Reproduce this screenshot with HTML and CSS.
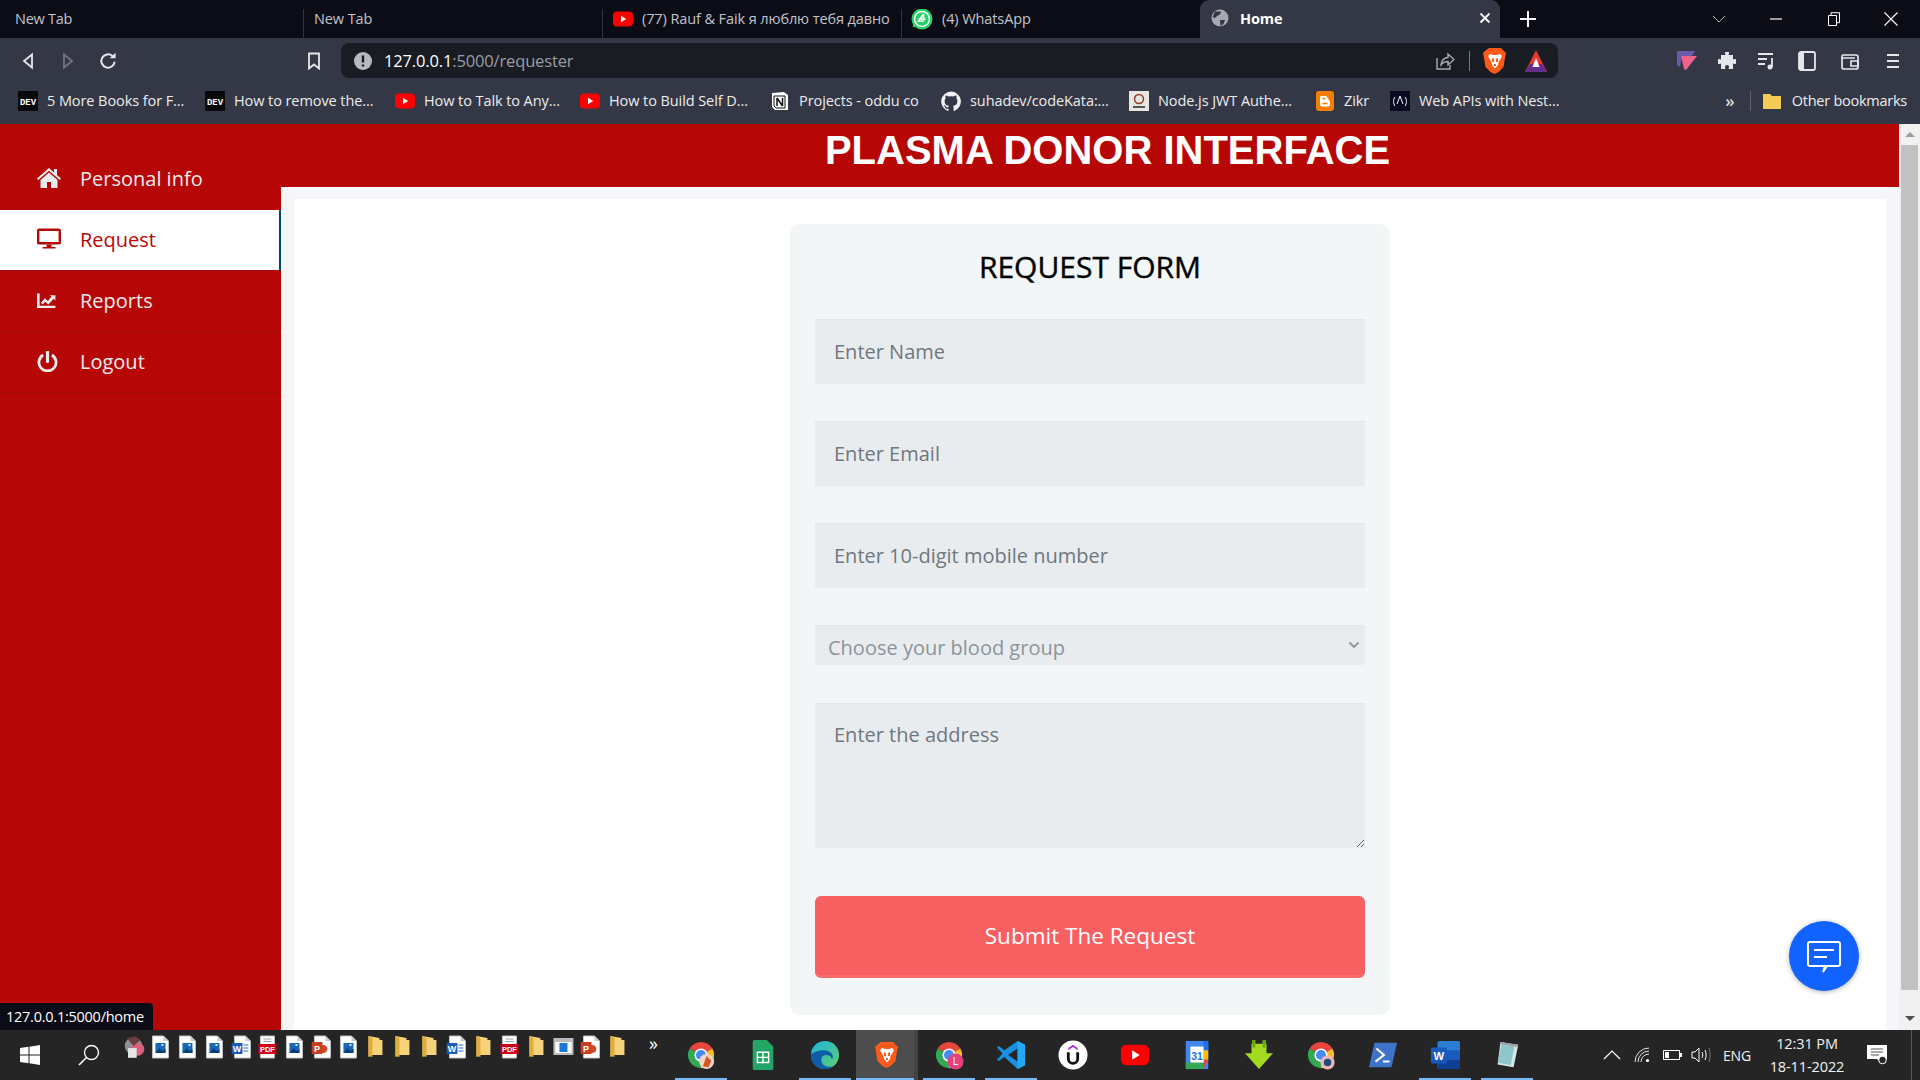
FILE: index.html
```html
<!DOCTYPE html>
<html lang="en">
<head>
<meta charset="utf-8">
<title>Home</title>
<link rel="stylesheet" href="styles.css">
</head>
<body>
<svg class="defs" width="0" height="0" aria-hidden="true">
  <symbol id="yt" viewBox="0 0 20 20"><rect x="0" y="2.500" width="20" height="15" rx="4" fill="#f00"/><path d="M8 6.800l5.200 3.200L8 13.200z" fill="#fff"/></symbol>
  <symbol id="chrome" viewBox="0 0 32 32"><path d="M16 16L3.880 9A14 14 0 0 1 28.120 9Z" fill="#e8453c"/><path d="M16 16L28.120 9A14 14 0 0 1 16 30Z" fill="#f9bb2d"/><path d="M16 16L16 30A14 14 0 0 1 3.880 9Z" fill="#34a853"/><circle cx="16" cy="16" r="7" fill="#fff"/><circle cx="16" cy="16" r="5.400" fill="#4a8af4"/></symbol>
  <symbol id="brave" viewBox="0 0 24 28"><path d="M6 1h12l3 3 2 2-1 5-1.500 9-5 5-4 2-4-2-5-5-1.500-9-1-5 2-2z" fill="#fb5a1b"/><path d="M7 7l3 1h4l3-1 2 2-1.500 3-2 3-.5 3-3 3.500L9 18l-.5-3-2-3L5 9z" fill="#fff"/><path d="M9 11l2 1v3H9zM15 11l-2 1v3h2zM11 17h2v2h-2z" fill="#fb5a1b"/></symbol>
  <symbol id="doc" viewBox="0 0 18 24"><path d="M1 1h11l5 5v17H1z" fill="#fff" stroke="#bfc3c7"/><path d="M12 1v5h5z" fill="#c7cbd0"/><rect x="4" y="8" width="10" height="10" fill="#1769b8"/><path d="M4 18l4-5 3 3 3-2v4z" fill="#0b3f7a"/><rect x="10" y="9" width="2" height="2" fill="#cfe5ff"/></symbol>
  <symbol id="docw" viewBox="0 0 20 24"><path d="M3 1h11l5 5v17H3z" fill="#fff" stroke="#bfc3c7"/><path d="M14 1v5h5z" fill="#c7cbd0"/><path d="M12 10h5M12 13h5M12 16h5" stroke="#2b6cc4"/><rect x="0" y="8" width="11" height="11" fill="#1d5bb8"/></symbol>
  <symbol id="docp" viewBox="0 0 20 24"><path d="M3 1h11l5 5v17H3z" fill="#fff" stroke="#bfc3c7"/><path d="M14 1v5h5z" fill="#c7cbd0"/><path d="M12 10a4 4 0 1 1-.1 0z" fill="#d24726"/><rect x="0" y="7" width="11" height="12" fill="#c9401f"/></symbol>
  <symbol id="docpdf" viewBox="0 0 20 24"><path d="M3 1h14v22H3z" fill="#fff" stroke="#bfc3c7"/><path d="M6 4h8M6 6.500h8" stroke="#9aa0a6"/><rect x="1" y="9" width="18" height="10" fill="#d4001a"/></symbol>
  <symbol id="folder" viewBox="0 0 16 24"><path d="M1 1l11 2v2h3v15H5l-4 2z" fill="#f6d27a"/><path d="M1 1l4 2v19l-4-1z" fill="#e0ad3c"/></symbol>
  <symbol id="dev" viewBox="0 0 20 20"><rect width="20" height="20" fill="#0a0a0a"/></symbol>
</svg>

<header class="tabstrip">
  <div class="tab tab-first"><span>New Tab</span></div>
  <div class="tab"><span>New Tab</span></div>
  <div class="tab"><svg class="ico20" viewBox="0 0 20 20"><use href="#yt"/></svg><span>(77) Rauf &amp; Faik я люблю тебя давно</span></div>
  <div class="tab tab-last"><svg class="ico22" viewBox="0 0 22 22"><circle cx="11" cy="11" r="10.500" fill="#25d366"/><path d="M3 19l1.500-5" stroke="#25d366" stroke-width="3"/><circle cx="11" cy="11" r="7.500" fill="none" stroke="#fff" stroke-width="1.500"/><path d="M12.500 6v7.200M12.500 13.200H7.500L12.500 6M14.500 11H7.500" stroke="#fff" stroke-width="1.600" fill="none"/></svg><span>(4) WhatsApp</span></div>
  <div class="tab-active">
    <svg class="ico18" viewBox="0 0 18 18"><circle cx="9" cy="9" r="8.500" fill="#a7a9b0"/><path d="M4 2.500h6l-1 3-3 1.500-2 2-2.500-1zM9 11h5l-1.500 4-3 2z" fill="#343745"/></svg>
    <span class="tab-title">Home</span>
    <svg class="tab-x" viewBox="0 0 12 12"><path d="M1.500 1.500l9 9M10.500 1.500l-9 9" stroke="#fff" stroke-width="1.800"/></svg>
  </div>
  <svg class="newtab" viewBox="0 0 16 16"><path d="M8 0v16M0 8h16" stroke="#fff" stroke-width="2"/></svg>
  <div class="winctl">
    <div class="wincell"><svg class="ico12" viewBox="0 0 14 8"><path d="M1 1l6 6 6-6" stroke="#b0b2ba" fill="none"/></svg></div>
    <div class="wincell"><svg class="ico12" viewBox="0 0 14 14"><path d="M1 7h12" stroke="#fff" stroke-width="1.200"/></svg></div>
    <div class="wincell"><svg class="ico14" viewBox="0 0 14 14"><path d="M1.500 3.500h8v10h-8zM4 3.500V.7h8.500v10H9.500" stroke="#fff" fill="none"/></svg></div>
    <div class="wincell"><svg class="ico14" viewBox="0 0 14 14"><path d="M.5.500l13 13M13.500.500l-13 13" stroke="#fff" stroke-width="1.100"/></svg></div>
  </div>
</header>

<nav class="toolbar">
  <div class="tool tool-first"><svg class="ico18" viewBox="0 0 18 18"><path d="M13 2.500L5 9l8 6.500z" fill="none" stroke="#e6e7ea" stroke-width="1.800"/></svg></div>
  <div class="tool"><svg class="ico18" viewBox="0 0 18 18"><path d="M5 2.500L13 9l-8 6.500z" fill="none" stroke="#74767f" stroke-width="1.800"/></svg></div>
  <div class="tool"><svg class="ico20" viewBox="0 0 18 18"><path d="M15 9.500A6 6 0 1 1 13 4.500" fill="none" stroke="#e6e7ea" stroke-width="1.800"/><path d="M10.500 6.500H15.800V1.500z" fill="#e6e7ea"/></svg></div>
  <div class="tool tool-bookmark"><svg class="ico18" viewBox="0 0 18 18"><path d="M4 1.500h10v15l-5-4-5 4z" fill="none" stroke="#e6e7ea" stroke-width="1.800"/></svg></div>
  <div class="omnibox">
    <svg class="ico18" viewBox="0 0 18 18"><circle cx="9" cy="9" r="9" fill="#b7b9c0"/><path d="M9 3.500v7M9 12.500v2" stroke="#1a1c23" stroke-width="2.400"/></svg>
    <span class="url"><span class="url-host">127.0.0.1</span>:5000/requester</span>
    <div class="omni-right">
      <svg class="ico20" viewBox="0 0 20 20"><path d="M2 7v11h13v-4" fill="none" stroke="#a9abb3" stroke-width="1.400"/><path d="M6 14c0-5 4-7.500 7-7.500V3l6 5.500-6 5.500v-3.500c-3 0-5 1-7 3.500z" fill="none" stroke="#a9abb3" stroke-width="1.400"/></svg>
      <span class="omni-div"></span>
      <svg class="ico-brave" viewBox="0 0 24 28"><use href="#brave"/></svg>
      <svg class="ico-bat" viewBox="0 0 24 24"><path d="M12 1L23 23H1z" fill="#e33b2e"/><path d="M1 23l5-8h12l5 8z" fill="#662d91"/><path d="M12 9l3.500 9h-7z" fill="#fff"/></svg>
    </div>
  </div>
  <div class="tool tool-ext"><svg class="ico20" viewBox="0 0 20 20"><path d="M0 0H18L15 5H5L3 16L0 14z" fill="#6a5aa8"/><path d="M4 5H20L9 19L7 18z" fill="#f0648c"/></svg></div>
  <div class="tool"><svg class="ico18" viewBox="0 0 18 18"><path d="M7 1a2 2 0 0 1 4 0c0 1-.5 1.500-.5 2H15v4.500c.5 0 1-.5 2-.5a2.500 2.500 0 0 1 0 5c-1 0-1.500-.5-2-.5V17h-4.500c0-.5.5-1 .5-2a2 2 0 0 0-4 0c0 1 .5 1.500.5 2H3v-5.500c-.5 0-1 .5-1.500.5a2.500 2.500 0 0 1 0-5c.5 0 1 .5 1.500.5V3h4.500C7.500 2.500 7 2 7 1z" fill="#e6e7ea"/></svg></div>
  <div class="tool"><svg class="ico20" viewBox="0 0 20 20"><path d="M1 3h15M1 8h9M1 13h7" stroke="#e6e7ea" stroke-width="1.800"/><path d="M15 7v9" stroke="#e6e7ea" stroke-width="1.800"/><circle cx="13" cy="16" r="2.500" fill="#e6e7ea"/></svg></div>
  <div class="tool"><svg class="ico20" viewBox="0 0 20 20"><rect x="2" y="1" width="16" height="18" rx="2" fill="none" stroke="#e6e7ea" stroke-width="1.800"/><rect x="2" y="1" width="5" height="18" fill="#e6e7ea"/></svg></div>
  <div class="tool tool-wallet"><svg class="ico20" viewBox="0 0 20 20"><path d="M3 4h13a2 2 0 0 1 2 2v10a2 2 0 0 1-2 2H4a2 2 0 0 1-2-2V5z" fill="none" stroke="#e6e7ea" stroke-width="1.700"/><path d="M2 7h13M11 10h7v5h-7z" fill="none" stroke="#e6e7ea" stroke-width="1.700"/></svg></div>
  <div class="tool"><svg class="ico18" viewBox="0 0 18 18"><path d="M3 3h12M3 9h12M3 15h12" stroke="#e6e7ea" stroke-width="1.800"/></svg></div>
</nav>

<nav class="bookmarks">
  <a class="bm w187"><svg class="ico20" viewBox="0 0 20 20"><use href="#dev"/><text x="10" y="13.800" class="svg-dev" text-anchor="middle">DEV</text></svg><span>5 More Books for F...</span></a>
  <a class="bm w190"><svg class="ico20" viewBox="0 0 20 20"><use href="#dev"/><text x="10" y="13.800" class="svg-dev" text-anchor="middle">DEV</text></svg><span>How to remove the...</span></a>
  <a class="bm w185"><svg class="ico20" viewBox="0 0 20 20"><use href="#yt"/></svg><span>How to Talk to Any...</span></a>
  <a class="bm w190"><svg class="ico20" viewBox="0 0 20 20"><use href="#yt"/></svg><span>How to Build Self D...</span></a>
  <a class="bm w171"><svg class="ico20" viewBox="0 0 20 20"><path d="M2 2l12-1 4 3v15H5l-3-3z" fill="#fff"/><path d="M4 5h11v12H6l-2-2z" fill="#fff" stroke="#111"/><path d="M7 7v8M12.500 7v8M7 7l5.500 8" stroke="#111" stroke-width="1.500"/></svg><span>Projects - oddu co</span></a>
  <a class="bm w188"><svg class="ico20" viewBox="0 0 20 20"><path d="M10 .5a10 10 0 0 0-3.200 19.400c.5.100.7-.2.700-.5v-1.700c-2.800.6-3.400-1.300-3.400-1.300-.4-1.100-1.100-1.500-1.100-1.500-.9-.6.100-.6.100-.6 1 .1 1.500 1 1.500 1 .9 1.500 2.300 1.100 2.900.8.100-.6.300-1.100.6-1.300-2.200-.3-4.500-1.100-4.500-4.900 0-1.100.4-2 1-2.700-.1-.3-.4-1.300.1-2.700 0 0 .8-.3 2.800 1a9.600 9.600 0 0 1 5 0c1.900-1.300 2.800-1 2.800-1 .5 1.400.2 2.400.1 2.700.6.700 1 1.600 1 2.700 0 3.800-2.300 4.600-4.500 4.900.4.300.7.900.7 1.900v2.700c0 .3.200.6.700.5A10 10 0 0 0 10 .5z" fill="#f2f2f4"/></svg><span>suhadev/codeKata:...</span></a>
  <a class="bm w186"><svg class="ico20" viewBox="0 0 20 20"><rect width="20" height="20" fill="#e8e6e2"/><circle cx="10" cy="8" r="4.500" fill="none" stroke="#8a3b2c" stroke-width="1.500"/><path d="M4 16h12" stroke="#555" stroke-width="2"/></svg><span>Node.js JWT Authe...</span></a>
  <a class="bm w75"><svg class="ico20" viewBox="0 0 20 20"><rect x="1" width="18" height="20" rx="3" fill="#f57d00"/><path d="M6 5h5l2.500 2.500v1.500L15 10v4l-1.500 1.500h-7L5 14V6z" fill="#fff"/><path d="M7.500 7.500h3M7.500 12.500h5" stroke="#f57d00" stroke-width="1.400"/></svg><span>Zikr</span></a>
  <a class="bm"><svg class="ico20" viewBox="0 0 20 20"><rect width="20" height="20" fill="#0a0a23"/><path d="M5 6c-2 3-2 6 0 9M15 6c2 3 2 6 0 9M10 5l-3 8M10 5l3 8" stroke="#fff" fill="none"/></svg><span>Web APIs with Nest...</span></a>
  <span class="bm-more">»</span>
  <span class="bm-div"></span>
  <a class="bm bm-other"><svg class="ico20" viewBox="0 0 20 20"><path d="M1 3h7l2 2h9v13H1z" fill="#f6cb55"/></svg><span>Other bookmarks</span></a>
</nav>

<div class="page">
  <aside class="sidebar">
    <a class="side-item">
      <svg class="side-ico" viewBox="0 0 24 20"><path d="M12 0L0 10.500l1.300 1.500L12 2.800 22.700 12l1.300-1.500-4-3.500V1h-3v3.400z" fill="currentColor"/><path d="M12 4.500L3.500 12v8H10v-6h4v6h6.500v-8z" fill="currentColor"/></svg>
      <span>Personal info</span>
    </a>
    <a class="side-item side-active">
      <svg class="side-ico" viewBox="0 0 24 21"><rect x="1.200" y="1.200" width="21.600" height="13.600" rx="1" fill="none" stroke="currentColor" stroke-width="2.400"/><path d="M0 14h24v1.500H0zM9.500 16h5v2.500h-5zM5.500 18.500h13V20h-13z" fill="currentColor"/></svg>
      <span>Request</span>
    </a>
    <a class="side-item">
      <svg class="side-ico side-ico-sm" viewBox="0 0 24 18"><path d="M0 1h3v14h18v2.500H0z" fill="currentColor"/><path d="M4.500 11.500L9 6.500l3.500 3 4-5L14.500 3h6.500v6l-2-2-6 6.500-3.500-3-3 3z" fill="currentColor"/></svg>
      <span>Reports</span>
    </a>
    <a class="side-item">
      <svg class="side-ico side-ico-sm" viewBox="0 0 24 24"><path d="M7 4.500a9.800 9.800 0 1 0 10 0" fill="none" stroke="currentColor" stroke-width="3.200"/><path d="M12 1v11" stroke="currentColor" stroke-width="3.600" stroke-linecap="round"/></svg>
      <span>Logout</span>
    </a>
  </aside>

  <main class="main">
    <div class="banner"><h1>PLASMA DONOR INTERFACE</h1></div>
    <div class="content">
      <section class="panel">
        <form class="card">
          <h2>REQUEST FORM</h2>
          <input class="field" type="text" placeholder="Enter Name">
          <input class="field" type="text" placeholder="Enter Email">
          <input class="field" type="text" placeholder="Enter 10-digit mobile number">
          <div class="select-wrap">
            <select class="select"><option>Choose your blood group</option></select>
            <svg class="select-arrow" viewBox="0 0 12 8"><path d="M1.500 1.500L6 6l4.500-4.500" fill="none" stroke="#8b949b" stroke-width="1.800"/></svg>
          </div>
          <textarea class="area" placeholder="Enter the address"></textarea>
          <button class="submit" type="button">Submit The Request</button>
        </form>
      </section>
    </div>
  </main>

  <div class="scrollbar">
    <span class="arrow-up"></span>
    <span class="thumb"></span>
    <span class="arrow-down"></span>
  </div>

  <div class="status">127.0.0.1:5000/home</div>
  <button class="chat" type="button" aria-label="Chat">
    <svg viewBox="0 0 36 34"><path d="M4 2h28a2 2 0 0 1 2 2v20a2 2 0 0 1-2 2H21l-4 6 2-6H4a2 2 0 0 1-2-2V4a2 2 0 0 1 2-2z" fill="none" stroke="#fff" stroke-width="2"/><path d="M8 10h20M8 17h13" stroke="#fff" stroke-width="2"/></svg>
  </button>
</div>

<footer class="taskbar">
  <div class="start"><svg class="ico-win" viewBox="0 0 20 20"><path d="M0 3l8.500-1.200v7.700H0zM9.500 1.700L20 0v9.500H9.500zM0 10.500h8.500v7.700L0 17zM9.500 10.500H20V20L9.500 18.300z" fill="#fff"/></svg></div>
  <div class="search"><svg class="ico-search" viewBox="0 0 22 22"><circle cx="13.500" cy="8.500" r="7" fill="none" stroke="#fff" stroke-width="1.400"/><path d="M8.500 13.500L1 21" stroke="#fff" stroke-width="1.600"/></svg></div>
  <div class="quick">
    <svg class="q q-ring" viewBox="0 0 20 24"><circle cx="10" cy="11" r="8" fill="#8d8f92"/><circle cx="14" cy="14" r="6" fill="#d9627a"/><rect x="5" y="13" width="8" height="9" fill="#e5e5e5"/><path d="M4 4l8-2 4 4-6 5z" fill="#6d3f3c"/></svg>
    <svg class="q" viewBox="0 0 18 24"><use href="#doc"/></svg>
    <svg class="q" viewBox="0 0 18 24"><use href="#doc"/></svg>
    <svg class="q" viewBox="0 0 18 24"><use href="#doc"/></svg>
    <svg class="q" viewBox="0 0 20 24"><use href="#docw"/><text x="5.500" y="17" class="svg-w" text-anchor="middle">W</text></svg>
    <svg class="q" viewBox="0 0 20 24"><use href="#docpdf"/><text x="10" y="17" class="svg-pdf" text-anchor="middle">PDF</text></svg>
    <svg class="q" viewBox="0 0 18 24"><use href="#doc"/></svg>
    <svg class="q" viewBox="0 0 20 24"><use href="#docp"/><text x="5.500" y="17" class="svg-w" text-anchor="middle">P</text></svg>
    <svg class="q" viewBox="0 0 18 24"><use href="#doc"/></svg>
    <svg class="q" viewBox="0 0 16 24"><use href="#folder"/></svg>
    <svg class="q" viewBox="0 0 16 24"><use href="#folder"/></svg>
    <svg class="q" viewBox="0 0 16 24"><use href="#folder"/></svg>
    <svg class="q" viewBox="0 0 20 24"><use href="#docw"/><text x="5.500" y="17" class="svg-w" text-anchor="middle">W</text></svg>
    <svg class="q" viewBox="0 0 16 24"><use href="#folder"/></svg>
    <svg class="q" viewBox="0 0 20 24"><use href="#docpdf"/><text x="10" y="17" class="svg-pdf" text-anchor="middle">PDF</text></svg>
    <svg class="q" viewBox="0 0 16 24"><use href="#folder"/></svg>
    <svg class="q" viewBox="0 0 20 24"><rect x="0" y="3" width="20" height="17" fill="#b8bcc2"/><rect x="2" y="7" width="16" height="11" fill="#fff"/><rect x="6" y="8" width="8" height="9" fill="#1a78d8"/></svg>
    <svg class="q" viewBox="0 0 20 24"><use href="#docp"/><text x="5.500" y="17" class="svg-w" text-anchor="middle">P</text></svg>
    <svg class="q" viewBox="0 0 16 24"><use href="#folder"/></svg>
    <span class="q-more">»</span>
  </div>
  <div class="pinned">
    <div class="pin pin-on"><svg class="pi" viewBox="0 0 32 32"><use href="#chrome"/><circle cx="22" cy="23" r="8" fill="#f4d6c8"/><path d="M22 17l5 5-3 7-6-1z" fill="#d9551f"/></svg></div>
    <div class="pin"><svg class="pi pi-narrow" viewBox="0 0 22 32"><path d="M2 0h13l7 7v23a2 2 0 0 1-2 2H2a2 2 0 0 1-2-2V2a2 2 0 0 1 2-2z" fill="#23a566"/><path d="M5 13h12v11H5z" fill="none" stroke="#fff" stroke-width="1.500"/><path d="M11 13v11M5 18.500h12" stroke="#fff" stroke-width="1.500"/></svg></div>
    <div class="pin pin-on"><svg class="pi" viewBox="0 0 32 32"><defs><linearGradient id="edge" x1="0" y1="0" x2="1" y2="1"><stop offset="0" stop-color="#1fb2e0"/><stop offset="1" stop-color="#5bd06b"/></linearGradient></defs><circle cx="16" cy="16" r="15" fill="url(#edge)"/><path d="M1 16c0 9 7 15 15 15 4 0 7-1 9-3-7 2-13-1-13-7 0-3 2-5 5-5 4 0 6 2 6 4h1c2-4-3-9-9-9C8 11 1 14 1 16z" fill="#0e5da8"/></svg></div>
    <div class="pin pin-active"><svg class="pi pi-narrow" viewBox="0 0 24 28"><use href="#brave"/></svg></div>
    <div class="pin pin-on"><svg class="pi" viewBox="0 0 32 32"><use href="#chrome"/><circle cx="23" cy="23" r="8.500" fill="#e5407f"/><text x="23" y="27" class="svg-l" text-anchor="middle">L</text></svg></div>
    <div class="pin pin-on"><svg class="pi" viewBox="0 0 32 32"><path d="M23 1l8 4v22l-8 4-14-13-6 4.500-2-1.500 6-6.500-6-6.500 2-1.500L9 11z" fill="#1a8ee0"/><path d="M23 9L13 16l10 7z" fill="#252525"/><path d="M23 1l8 4v22l-8 4z" fill="#23a9f2"/></svg></div>
    <div class="pin"><svg class="pi" viewBox="0 0 32 32"><circle cx="16" cy="16" r="15.500" fill="#fff"/><path d="M16 5l5 3.500v2.500L16 7.500 11 11V8.500z" fill="#a435f0"/><path d="M11 13v7a5 5 0 0 0 10 0v-7" fill="none" stroke="#111" stroke-width="3"/></svg></div>
    <div class="pin"><svg class="pi" viewBox="0 0 32 32"><rect x="1" y="5" width="30" height="22" rx="6" fill="#f00"/><path d="M13 11l8 5-8 5z" fill="#fff"/></svg></div>
    <div class="pin"><svg class="pi" viewBox="0 0 32 32"><path d="M4 1h24v30H4z" fill="#4285f4"/><path d="M23 1h3a2 2 0 0 1 2 2v8h-5z" fill="#1a73e8"/><path d="M23 11h5v10h-5z" fill="#fbbc04"/><path d="M4 24h19v7H4z" fill="#34a853"/><path d="M23 21h5l-5 10z" fill="#ea4335"/><rect x="9" y="7" width="14" height="17" fill="#fff"/><text x="16" y="21" class="svg-cal" text-anchor="middle">31</text></svg></div>
    <div class="pin"><svg class="pi" viewBox="0 0 32 32"><path d="M9 0h3v4h8V0h3v4h1v10h7L16 31 1 14h7V4h1z" fill="#a3d91f"/><path d="M9 0h3v8H9zM20 0h3v8h-3z" fill="#6ea70f"/></svg></div>
    <div class="pin"><svg class="pi" viewBox="0 0 32 32"><use href="#chrome"/><circle cx="23" cy="24" r="7.500" fill="#f2b6b6"/><circle cx="23" cy="24" r="4" fill="#1f4d78"/></svg></div>
    <div class="pin"><svg class="pi" viewBox="0 0 32 32"><path d="M7 3h24l-6 26H1z" fill="#3f73c9"/><path d="M9 9l8 7-9 7M16 23h7" fill="none" stroke="#fff" stroke-width="2.200"/></svg></div>
    <div class="pin pin-on"><svg class="pi" viewBox="0 0 32 32"><rect x="8" y="1" width="24" height="30" rx="2" fill="#2b7cd3"/><rect x="8" y="11" width="24" height="10" fill="#185abd"/><rect x="8" y="21" width="24" height="10" fill="#103f91"/><rect x="1" y="8" width="17" height="17" rx="1.500" fill="#185abd"/><text x="9.500" y="21" class="svg-word" text-anchor="middle">W</text></svg></div>
    <div class="pin pin-on"><svg class="pi" viewBox="0 0 32 32"><path d="M9 2l19 3-5 24-17-3z" fill="#d4e8e9"/><path d="M10 5l14 2-4 20-14-3z" fill="#8fc6c9"/><path d="M9 2l19 3-.5 2.500L8.500 4.500z" fill="#9aa0a6"/></svg></div>
  </div>
  <div class="tray">
    <svg class="tr tr-chev" viewBox="0 0 18 10"><path d="M1 9l8-8 8 8" fill="none" stroke="#fff" stroke-width="1.200"/></svg>
    <svg class="tr tr-wifi" viewBox="0 0 16 16"><path d="M1 15A14 14 0 0 1 15 1M4 15A11 11 0 0 1 15 4" fill="none" stroke="#e6e6e6"/><path d="M7 15a8 8 0 0 1 8-8" fill="none" stroke="#e6e6e6"/><circle cx="13.500" cy="13.500" r="1.600" fill="#fff"/></svg>
    <svg class="tr tr-bat" viewBox="0 0 20 12"><path d="M.5 1.500h16v9H.5z" fill="none" stroke="#fff"/><rect x="2" y="3" width="4" height="6" fill="#fff"/><rect x="17" y="4" width="2" height="4" fill="#fff"/></svg>
    <svg class="tr tr-vol" viewBox="0 0 20 16"><path d="M1 5h3l4-4v14l-4-4H1z" fill="none" stroke="#fff"/><path d="M11 5c1 2 1 4 0 6" fill="none" stroke="#fff"/><path d="M14 3c1.500 3 1.500 7 0 10" fill="none" stroke="#fff"/><path d="M18 1c1.500 4 1.500 10 0 14" fill="none" stroke="#777"/></svg>
    <span class="tr-lang">ENG</span>
    <div class="clock"><span>12:31 PM</span><span>18-11-2022</span></div>
    <svg class="tr-note" viewBox="0 0 20 20"><path d="M0 0h20v14h-5l-1 4-4-4H0z" fill="#fff"/><path d="M4 4h12M4 7h12M4 10h8" stroke="#555"/><circle cx="15.500" cy="15" r="3.800" fill="#252525" stroke="#fff"/></svg>
    <span class="tr-desk"></span>
  </div>
</footer>
</body>
</html>
```

FILE: styles.css
```css
* { box-sizing: border-box; }
html, body { margin: 0; padding: 0; }
body {
  width: 1920px;
  height: 1080px;
  overflow: hidden;
  display: flex;
  flex-direction: column;
  font-family: "Open Sans", "Noto Sans", sans-serif;
}
.defs { position: absolute; }
.svg-w { font: 700 9px "Liberation Sans", sans-serif; fill: #fff; }
.svg-pdf { font: 700 7.500px "Liberation Sans", sans-serif; fill: #fff; }
.svg-dev { font: 700 9px "Liberation Mono", monospace; fill: #fff; }
.svg-l { font: 400 11px "Liberation Sans", sans-serif; fill: #fff; }
.svg-cal { font: 700 11px "Liberation Sans", sans-serif; fill: #1a73e8; }
.svg-word { font: 700 12px "Liberation Sans", sans-serif; fill: #fff; }

.ico12 { width: 14px; height: 14px; }
.ico14 { width: 14px; height: 14px; }
.ico18 { width: 18px; height: 18px; flex: none; }
.ico20 { width: 20px; height: 20px; flex: none; }
.ico22 { width: 22px; height: 22px; flex: none; }

/* tab strip */
.tabstrip {
  height: 38px;
  flex: none;
  display: flex;
  align-items: flex-end;
  background: #0b0c16;
  color: #c2c4cb;
  font-size: 14.500px;
  letter-spacing: -0.1px;
}
.tab {
  width: 299px;
  height: 29px;
  display: flex;
  align-items: center;
  gap: 9px;
  padding: 0 0 10px 10px;
  border-right: 1px solid #33353f;
  white-space: nowrap;
  overflow: hidden;
}
.tab-first { width: 304px; padding-left: 15px; letter-spacing: -0.25px; }
.tab-last { width: 298px; padding-left: 9px; border-right: 0; }
.tab-active {
  width: 300px;
  height: 38px;
  display: flex;
  align-items: center;
  padding: 0 9px 2px 11px;
  background: #343745;
  border-radius: 9px 9px 0 0;
  color: #fff;
}
.tab-title { margin-left: 11px; font-weight: 700; }
.tab-x { width: 12px; height: 12px; margin-left: auto; }
.newtab { width: 16px; height: 16px; margin: 0 0 11px 20px; flex: none; }
.winctl { margin-left: auto; display: flex; height: 38px; }
.wincell { width: 57.500px; display: flex; align-items: center; justify-content: center; }

/* toolbar */
.toolbar {
  height: 46px;
  flex: none;
  display: flex;
  align-items: center;
  padding-bottom: 1px;
  background: #343745;
}
.tool { width: 40px; height: 45px; display: flex; align-items: center; justify-content: center; flex: none; }
.tool-first { margin-left: 8px; }
.tool-bookmark { margin-left: 166px; }
.tool-ext { margin-left: 109px; }
.tool-wallet { margin-left: 3px; margin-right: 3px; }
.omnibox {
  margin-left: 7px;
  width: 1217px;
  height: 35px;
  display: flex;
  align-items: center;
  padding: 0 10px 0 13px;
  background: #1a1c23;
  border-radius: 8px;
}
.url { margin-left: 12px; padding-bottom: 1px; font-size: 16.500px; color: #9a9ca5; letter-spacing: -0.15px; white-space: nowrap; }
.url-host { color: #fff; }
.omni-right { margin-left: auto; display: flex; align-items: center; }
.omni-div { width: 1px; height: 20px; background: #777982; margin: 0 13px 0 14px; }
.ico-brave { width: 24px; height: 28px; }
.ico-bat { width: 24px; height: 24px; margin-left: 17px; }

/* bookmarks */
.bookmarks {
  height: 40px;
  flex: none;
  display: flex;
  align-items: center;
  padding: 0 0 7px 18px;
  background: #343745;
  color: #eceded;
  font-size: 14.500px;
  letter-spacing: -0.08px;
  white-space: nowrap;
}
.bm { display: flex; align-items: center; gap: 9px; flex: none; }
.w187 { width: 187px; }
.w190 { width: 190px; }
.w185 { width: 185px; }
.w171 { width: 171px; }
.w188 { width: 188px; }
.w186 { width: 186px; }
.w75 { width: 75px; }
.bm-more { margin-left: auto; font-size: 17px; font-weight: 600; color: #d8d9dc; }
.bm-div { width: 1px; height: 20px; background: #62646f; margin: 0 11px 0 15px; }
.bm-other { margin-right: 13px; gap: 10px; letter-spacing: -0.25px; }

/* page */
.page {
  position: relative;
  height: 906px;
  flex: none;
  display: flex;
  overflow: hidden;
  background: #fff;
}
.sidebar {
  width: 281px;
  flex: none;
  padding-top: 25px;
  background: #b70606;
  color: #e9ecef;
  font-size: 20px;
}
.side-item {
  height: 61px;
  display: flex;
  align-items: center;
  padding: 0 0 2px 37px;
  border-bottom: 1px solid #9c0c0c;
}
.side-item:first-child { border-bottom-color: #b70606; }
.side-active {
  background: #fff;
  color: #b70606;
  border-right: 2px solid #004a6e;
  border-bottom-color: #9c0c0c;
}
.side-ico { width: 24px; height: 24px; margin-right: 19px; flex: none; }
.side-ico-sm { width: 21px; height: 21px; margin-right: 22px; }

.main { flex: 1; min-width: 0; display: flex; flex-direction: column; }
.banner {
  height: 63px;
  flex: none;
  display: flex;
  align-items: center;
  justify-content: center;
  padding: 0 0 11px 35px;
  background: #b70606;
}
.banner h1 {
  margin: 0;
  font: 700 40px "Liberation Sans", Arial, sans-serif;
  color: #fff;
}
.content { flex: 1; min-height: 0; padding: 12px 13px 0 13px; background: #f4f6fa; }
.panel { height: 100%; display: flex; justify-content: center; align-items: flex-start; background: #fff; padding-top: 25px; }
.card {
  width: 600px;
  height: 791px;
  flex: none;
  display: flex;
  flex-direction: column;
  gap: 37px;
  padding: 0 25px;
  background: #f2f6f7;
  border-radius: 10px;
}
.card h2 {
  margin: 0;
  height: 58px;
  flex: none;
  padding-top: 28px;
  display: flex;
  align-items: center;
  justify-content: center;
  font-size: 30px;
  font-weight: 400;
  line-height: 30px;
  color: #000;
  -webkit-text-stroke: 0.4px #000;
}
.field, .select, .area {
  display: block;
  width: 100%;
  border: 0;
  border-top: 1px solid #e2e6e8;
  outline: 0;
  background: #e8ecee;
  font-family: inherit;
  font-size: 20px;
  color: #495057;
}
.field::placeholder, .area::placeholder { color: #6f7780; opacity: 1; }
.field { height: 65px; flex: none; padding: 0 19px 1px; }
.select-wrap { position: relative; height: 40px; flex: none; }
.select {
  height: 40px;
  padding: 3px 0 0 13px;
  appearance: none;
  -webkit-appearance: none;
  border-radius: 3px;
  color: #8b949b;
}
.select-arrow { position: absolute; right: 5px; top: 16px; width: 12px; height: 8px; }
.area { height: 145px; flex: none; margin-top: 1px; padding: 17px 19px; resize: vertical; }
.submit {
  height: 82px;
  flex: none;
  margin-top: 11px;
  border: 0;
  border-bottom: 3px solid #fb6b6d;
  border-radius: 6px;
  background: #f75f61;
  color: #fff;
  font-family: inherit;
  font-size: 22.500px;
}

.scrollbar {
  width: 21px;
  flex: none;
  display: flex;
  flex-direction: column;
  align-items: center;
  background: #f1f1f1;
}
.arrow-up, .arrow-down { width: 0; height: 0; border-left: 5px solid transparent; border-right: 5px solid transparent; flex: none; }
.arrow-up { margin-top: 8px; border-bottom: 5px solid #9c9c9c; }
.thumb { width: 17px; height: 845px; margin-top: 8px; background: #c1c1c1; flex: none; }
.arrow-down { margin-top: 26px; border-top: 5px solid #505050; }

.status {
  position: absolute;
  left: 0;
  bottom: 0;
  width: 153px;
  height: 27px;
  padding: 4px 0 0 6px;
  background: #0b0c16;
  border-radius: 0 4px 0 0;
  color: #fff;
  font-size: 14.500px;
  letter-spacing: -0.25px;
  white-space: nowrap;
}
.chat {
  position: absolute;
  left: 1789px;
  top: 797px;
  width: 70px;
  height: 70px;
  padding: 0;
  border: 0;
  border-radius: 50%;
  background: #1262ff;
  box-shadow: 0 1px 5px rgba(0, 0, 0, .3);
  display: flex;
  align-items: center;
  justify-content: center;
}
.chat svg { width: 36px; height: 34px; margin-top: 2px; }

/* taskbar */
.taskbar {
  height: 50px;
  flex: none;
  display: flex;
  background: #252525;
}
.start { width: 60px; display: flex; align-items: center; justify-content: center; flex: none; }
.ico-win { width: 20px; height: 20px; }
.search { width: 58px; display: flex; align-items: center; justify-content: center; flex: none; }
.ico-search { width: 22px; height: 22px; }
.quick { width: 558px; flex: none; display: flex; align-items: center; height: 34px; padding-left: 2px; }
.q { width: 26.900px; height: 24px; flex: none; }
.q-ring { height: 26px; }
.q-more { margin: -8px 0 0 18px; color: #fff; font-size: 18px; }
.pinned { display: flex; width: 868px; flex: none; margin-left: -6px; }
.pin { width: 62px; height: 50px; flex: none; display: flex; align-items: center; justify-content: center; }
.pi { width: 30px; height: 30px; }
.pi-narrow { width: 24px; height: 30px; }
.pin-on { box-shadow: inset 5px 0 0 #252525, inset -5px 0 0 #252525, inset 0 -2px 0 #76b9ff; }
.pin-active { background: #4d4d4d; box-shadow: inset -4px 0 0 #434343, inset 0 -2px 0 #76b9ff; }
.tray {
  flex: 1;
  display: flex;
  align-items: center;
  color: #f0f0f0;
  font-size: 14px;
}
.tr { flex: none; }
.tr-chev { width: 18px; height: 10px; margin-left: 65px; }
.tr-wifi { width: 16px; height: 16px; margin-left: 13px; }
.tr-bat { width: 20px; height: 12px; margin-left: 13px; }
.tr-vol { width: 20px; height: 16px; margin-left: 8px; }
.tr-lang { margin-left: 12px; width: 30px; letter-spacing: -0.2px; }
.clock { margin-left: 14px; width: 80px; display: flex; flex-direction: column; align-items: center; font-size: 14.500px; line-height: 23px; letter-spacing: -0.1px; white-space: nowrap; }
.tr-note { width: 20px; height: 20px; margin-left: 20px; flex: none; }
.tr-desk { width: 1px; height: 50px; background: #555; margin-left: 24px; }
```
